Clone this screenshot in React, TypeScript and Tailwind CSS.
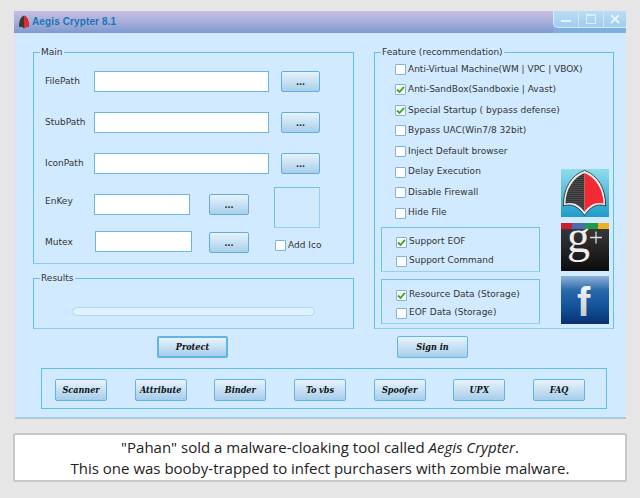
const ui = "font-['DejaVu_Sans',sans-serif] text-[9px] text-[#333]";

function Check({ on, label }: { on?: boolean; label: string }) {
  return (
    <div className="flex h-[20.55px] items-center whitespace-nowrap">
      <span className="flex h-[11px] w-[11px] shrink-0 items-center justify-center rounded-[1px] border border-[#7fb3dc] bg-white">
        {on && (
          <svg width="9" height="9" viewBox="0 0 9 9">
            <path d="M1 4.5 L3.5 7 L8 1.8" fill="none" stroke="#3aa51c" strokeWidth="1.8" />
          </svg>
        )}
      </span>
      <span className="ml-[2px]">{label}</span>
    </div>
  );
}

function Box({ title, className, children }: { title: string; className: string; children: React.ReactNode }) {
  return (
    <div className={`relative border border-[#5cc0ea] border-b-[#84cdf0] ${className}`}>
      <span className="absolute left-[6px] top-[-7px] bg-[#d2eaff] px-px leading-[12px]">{title}</span>
      {children}
    </div>
  );
}

function Input({ className }: { className: string }) {
  return <div className={`h-[21px] shrink-0 border border-[#6fb5e2] bg-white ${className}`} />;
}

function Dots({ className }: { className: string }) {
  return (
    <button className={`flex h-[21px] shrink-0 items-center justify-center rounded-[2px] border border-[#62ade0] bg-linear-to-b from-[#e6f3fc] to-[#a9cfea] pt-[2px] text-[8px] font-bold text-[#222] ${className}`}>
      ...
    </button>
  );
}

function Act({ label, className }: { label: string; className: string }) {
  return (
    <button className={`h-[22px] shrink-0 rounded-[2px] border border-[#62b4e6] bg-linear-to-b from-[#e8f4fc] to-[#a6cdea] pt-px font-['DejaVu_Serif_Condensed','DejaVu_Serif',serif] text-[9px] font-bold italic text-[#111] ${className}`}>
      {label}
    </button>
  );
}

function PathRow({ label }: { label: string }) {
  return (
    <div className="flex h-[21px] items-center pl-[11px]">
      <span className="w-[49px] shrink-0 pt-px">{label}</span>
      <Input className="w-[175px]" />
      <Dots className="ml-[12px] w-[39px]" />
    </div>
  );
}

function AegisLogo() {
  return (
    <svg width="48" height="48" viewBox="0 0 48 48" className="block">
      <defs>
        <linearGradient id="aegis-bg" x1="0" y1="0" x2="0" y2="1">
          <stop offset="0" stopColor="#8fdcec" />
          <stop offset="1" stopColor="#1f9ccb" />
        </linearGradient>
        <pattern id="aegis-lines" width="4" height="2" patternUnits="userSpaceOnUse">
          <rect width="4" height="1" fill="#4a4a4a" />
          <rect y="1" width="4" height="1" fill="#363636" />
        </pattern>
      </defs>
      <rect width="48" height="48" fill="url(#aegis-bg)" />
      <path d="M23.5 1.5 C10 6 2 20 2.5 37 C11 34 18 38 23.5 46.5 C29 38 36 34 44.5 37 C45 20 37 6 23.5 1.5Z" fill="#eee" stroke="#222" strokeWidth="0.8" />
      <path d="M23.5 4 C12 8.5 4.5 21 4.5 34.5 C12 32.5 19 36 23.5 43Z" fill="url(#aegis-lines)" />
      <path d="M23.5 4 C35 8.5 42.5 21 42.5 34.5 C35 32.5 28 36 23.5 43Z" fill="#f22a33" />
    </svg>
  );
}

function GPlusLogo() {
  return (
    <svg width="48" height="48" viewBox="0 0 48 48" className="block overflow-visible">
      <defs>
        <linearGradient id="gp-bg" x1="0" y1="0" x2="0" y2="1">
          <stop offset="0" stopColor="#3e3e3e" />
          <stop offset="1" stopColor="#0c0c0c" />
        </linearGradient>
      </defs>
      <rect width="48" height="48" fill="url(#gp-bg)" />
      <rect width="11" height="6" fill="#c9202b" />
      <rect x="11" width="13" height="6" fill="#4a6cb3" />
      <rect x="24" width="13" height="6" fill="#1f9a4c" />
      <rect x="37" width="11" height="6" fill="#efb020" />
      <text x="6" y="29" fontFamily="'Liberation Serif', serif" fontSize="46" fill="#eee">g</text>
      <path d="M29 14.5 H41 M35 8.5 V20.5" stroke="#ddd" strokeWidth="1.3" />
    </svg>
  );
}

function FacebookLogo() {
  return (
    <svg width="48" height="48" viewBox="0 0 48 48" className="block overflow-visible">
      <defs>
        <linearGradient id="fb-bg" x1="0" y1="0" x2="0" y2="1">
          <stop offset="0" stopColor="#8fb2d8" />
          <stop offset="0.3" stopColor="#2a68ad" />
          <stop offset="0.7" stopColor="#0f4e96" />
          <stop offset="1" stopColor="#0a2f6e" />
        </linearGradient>
        <linearGradient id="fb-f" x1="0" y1="0" x2="0" y2="1">
          <stop offset="0" stopColor="#fff" />
          <stop offset="1" stopColor="#bdbdbd" />
        </linearGradient>
      </defs>
      <rect width="48" height="48" fill="url(#fb-bg)" />
      <text x="16" y="40" fontFamily="'Liberation Sans', sans-serif" fontWeight="700" fontSize="40" fill="url(#fb-f)">f</text>
    </svg>
  );
}

export default function App() {
  return (
    <div className={`flex h-[498px] w-[640px] flex-col overflow-hidden bg-[#e6e6e6] px-[14px] pt-[11px] ${ui}`}>
      <div className="flex h-[408px] w-[612px] shrink-0 flex-col border-b-2 border-l-2 border-b-[#a8cde2] border-l-[#e4e0f2] bg-[#d2eaff]">
        {/* title bar */}
        <div className="-ml-[2px] flex h-[22px] shrink-0 items-stretch bg-linear-to-b from-[#c6bfdf] via-[#a5aedb] to-[#7f9ad0]">
          <svg width="12" height="14" viewBox="0 0 12 14" className="ml-[4px] mt-[4px]">
            <path d="M6 .5 C2.5 2 1 6 1 12 C3 11.5 5 12.5 6 13.5 C7 12.5 9 11.5 11 12 C11 6 9.5 2 6 .5Z" fill="#3a3a3a" />
            <path d="M6 .5 C9.5 2 11 6 11 12 C9 11.5 7 12.5 6 13.5Z" fill="#e8262c" />
          </svg>
          <span className="ml-[2px] mt-[4px] font-['Liberation_Sans',sans-serif] text-[10px] font-bold leading-[14px] tracking-[0.12px] text-[#1a74b8]">
            Aegis Crypter 8.1
          </span>
          <div className="ml-auto h-full w-[73px] bg-[#7fafdc]">
            <div className="flex h-[17px] rounded-bl-[5px] border-b border-l border-[#d6ecfb] bg-linear-to-b from-[#bcdcf4] to-[#a0cdf0]">
              <div className="flex w-[25px] justify-center border-r border-[#cfe7f8] pt-[9px]">
                <span className="h-[2px] w-[10px] bg-[#e3f2fc]" />
              </div>
              <div className="flex w-[25px] justify-center border-r border-[#cfe7f8] pt-[3px]">
                <span className="h-[10px] w-[10px] border border-t-2 border-[#d9eefb]" />
              </div>
              <div className="flex flex-1 justify-center pt-[3px]">
                <svg width="10" height="10" viewBox="0 0 10 10">
                  <path d="M1 1 L9 9 M9 1 L1 9" stroke="#e6f4fd" strokeWidth="2" />
                </svg>
              </div>
            </div>
          </div>
        </div>

        {/* panels */}
        <div className="ml-[17px] mt-[19px] flex h-[277px] shrink-0">
          <div className="flex w-[321px] flex-col">
            <Box title="Main" className="h-[212px]">
              <div className="flex flex-col gap-[20px] pt-[18px]">
                <PathRow label="FilePath" />
                <PathRow label="StubPath" />
                <PathRow label="IconPath" />
              </div>
              <div className="mt-[20px] flex">
                <div className="flex flex-col pl-[11px]">
                  <div className="flex h-[21px] items-start">
                    <span className="w-[49px] shrink-0 pt-px">EnKey</span>
                    <Input className="w-[96px]" />
                    <Dots className="ml-[19px] w-[40px]" />
                  </div>
                  <div className="mt-[16px] flex h-[22px] items-start">
                    <span className="w-[50px] shrink-0 pt-[5px]">Mutex</span>
                    <Input className="w-[97px]" />
                    <Dots className="ml-[17px] mt-px w-[40px]" />
                  </div>
                </div>
                <div className="ml-[25px] flex flex-col">
                  <div className="-mt-[7px] h-[41px] w-[46px] border border-[#6cc4ec] border-b-[#8fd3f2] border-r-[#8fd3f2]" />
                  <div className="ml-px mt-[7px]">
                    <Check label="Add Ico" />
                  </div>
                </div>
              </div>
            </Box>
            <Box title="Results" className="mt-[14px] h-[51px]">
              <div className="ml-[38px] mt-[28px] h-[9px] w-[243px] rounded-full border border-[#a6dcf5] bg-[#e0f2fd]" />
            </Box>
          </div>
          <Box title="Feature (recommendation)" className="ml-[20px] flex w-[240px]">
            <div className="w-[186px] shrink-0 pl-[6px] pt-[6px]">
              <div className="ml-[14px]">
                <Check label="Anti-Virtual Machine(WM | VPC | VBOX)" />
                <Check on label="Anti-SandBox(Sandboxie | Avast)" />
                <Check on label="Special Startup ( bypass defense)" />
                <Check label="Bypass UAC(Win7/8 32bit)" />
                <Check label="Inject Default browser" />
                <Check label="Delay Execution" />
                <Check label="Disable Firewall" />
                <Check label="Hide File" />
              </div>
              <div className="mt-[4px] flex h-[45px] w-[159px] flex-col justify-center border border-[#6cc4ec] border-b-[#8fd3f2] pl-[14px] pt-[2px]">
                <div className="h-[19px]"><Check on label="Support EOF" /></div>
                <div className="h-[19px]"><Check label="Support Command" /></div>
              </div>
              <div className="mt-[7px] flex h-[45px] w-[159px] flex-col justify-center border border-[#6cc4ec] border-b-[#8fd3f2] pl-[14px] pt-[2px]">
                <div className="h-[18px]"><Check on label="Resource Data (Storage)" /></div>
                <div className="h-[18px]"><Check label="EOF Data (Storage)" /></div>
              </div>
            </div>
            <div className="flex flex-col gap-[6px] pt-[116px]">
              <AegisLogo />
              <GPlusLogo />
              <div className="-mt-px"><FacebookLogo /></div>
            </div>
          </Box>
        </div>

        {/* main actions */}
        <div className="mt-[7px] flex shrink-0">
          <Act label="Protect" className="ml-[141px] w-[71px] border-2 border-[#55b8ea]" />
          <Act label="Sign in" className="ml-[169px] w-[71px]" />
        </div>

        {/* tools */}
        <div className="ml-[25px] mt-[10px] flex h-[41px] w-[566px] shrink-0 items-start justify-between border border-[#5cc0ea] pl-[13px] pr-[21px] pt-[10px]">
          {["Scanner", "Attribute", "Binder", "To vbs", "Spoofer", "UPX", "FAQ"].map((t) => (
            <Act key={t} label={t} className="w-[52px]" />
          ))}
        </div>
      </div>

      {/* caption */}
      <div className="-mx-px mt-[14px] flex h-[49px] shrink-0 flex-col items-center justify-center rounded-[2px] border-2 border-[#c8c8c8] bg-white font-['Open_Sans',sans-serif] text-[15px] leading-[21px] text-[#222]">
        <p>"Pahan" sold a malware-cloaking tool called <em>Aegis Crypter</em>.</p>
        <p>This one was booby-trapped to infect purchasers with zombie malware.</p>
      </div>
    </div>
  );
}
